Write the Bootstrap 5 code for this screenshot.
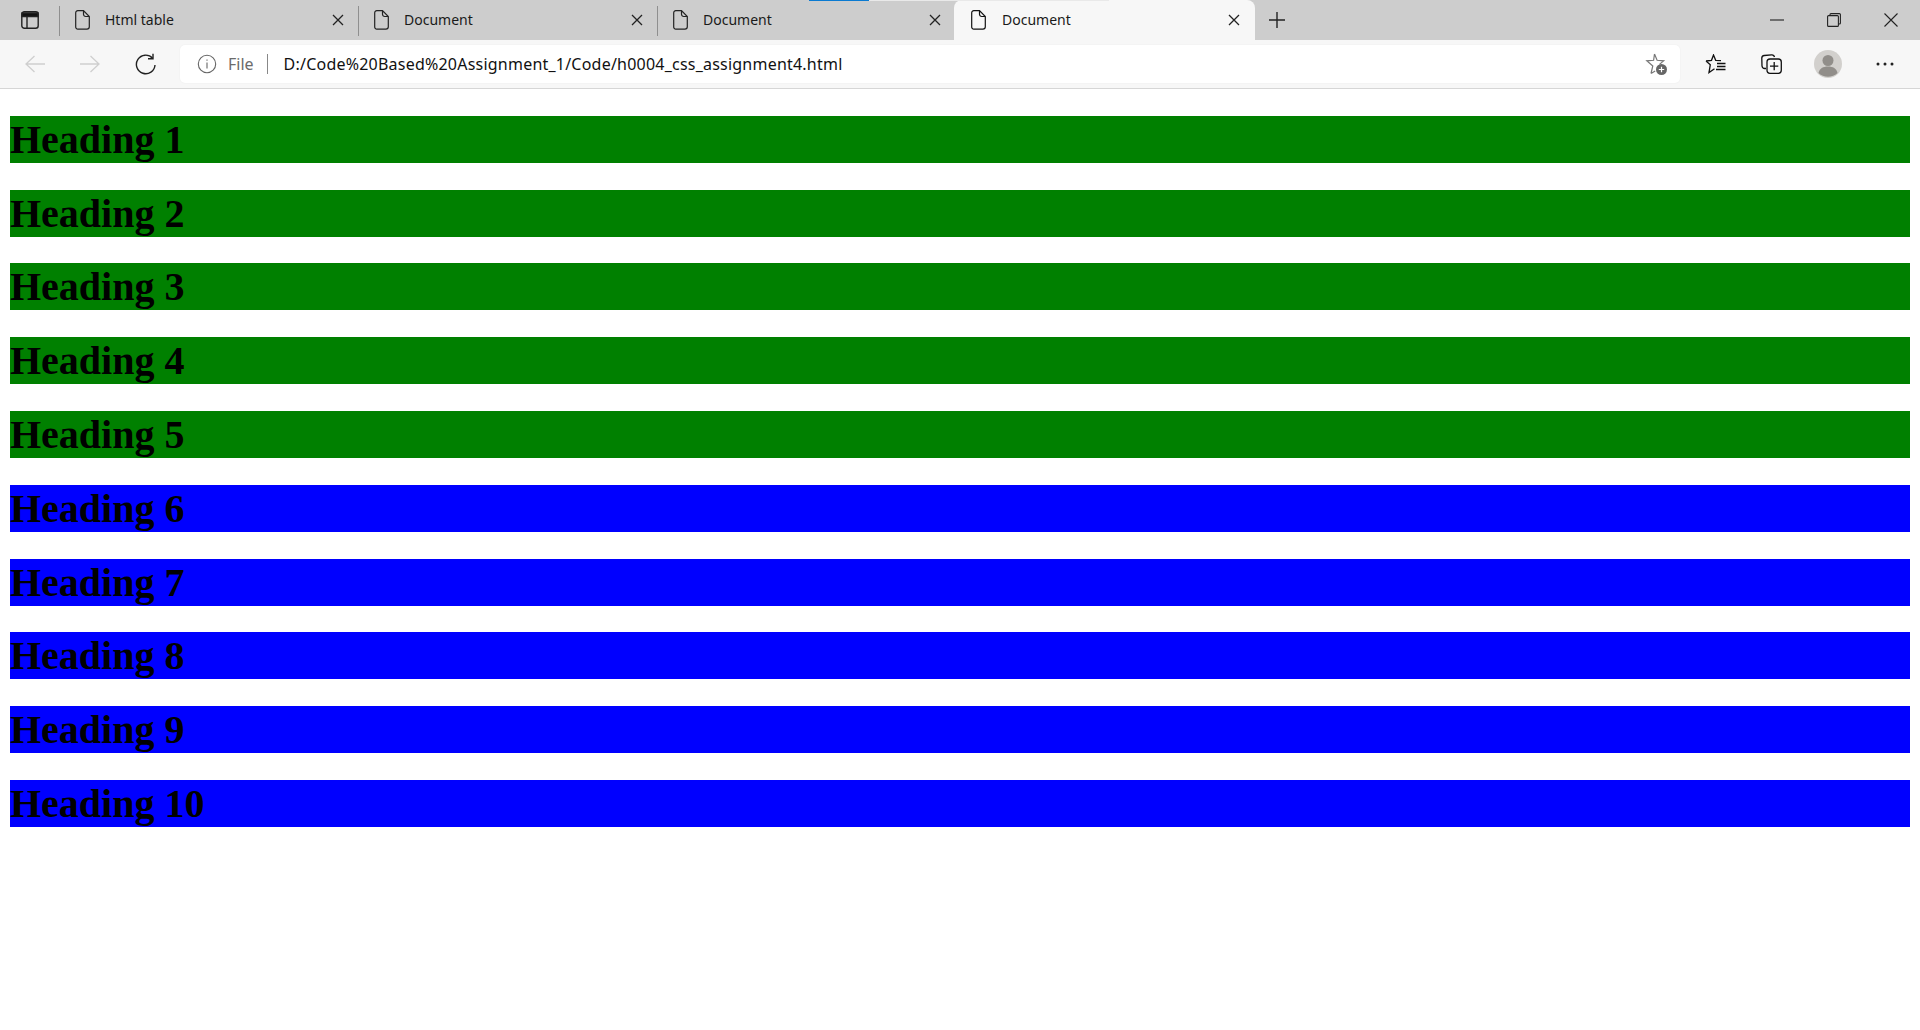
<!DOCTYPE html>
<html lang="en">
<head>
<meta charset="utf-8">
<title>Document</title>
<link href="https://cdn.jsdelivr.net/npm/bootstrap@5.3.0/dist/css/bootstrap.min.css" rel="stylesheet">
<style>
html,body{height:1030px;overflow:hidden;background:#fff}
.chrome-ui{font-family:"Noto Sans","Open Sans",sans-serif;color:#1a1a1a;position:relative}
.tabstrip{height:40px;background:#cdcdcd}
.strip-lead{width:59px;padding-left:21px;flex:none}
.strip-sep{width:1px;height:30px;background:#8f8f8f;align-self:center;flex:none;margin-top:1px}
.tabitem{width:298px;height:40px;flex:none;font-size:14px;line-height:40px;padding-left:15px}
.tabitem .tab-title{margin-left:15px;flex:1}
.tabitem .tab-x{margin-right:14px}
.tabitem-active{width:301px;background:#f7f7f7;border-radius:8px 8px 0 0;padding-left:17px}
.tabitem-active .tab-title{margin-left:16px}
.tabitem-active .tab-x{margin-right:15px}
.tabitem-last{width:296px}
.tabitem-last .tab-x{margin-right:13px}
.plus-btn{margin-left:13px;flex:none}
.win-btns{margin-left:auto;margin-right:1px}
.win-btn{width:57px;display:flex;justify-content:center}
.progress-a{position:absolute;top:0;left:809px;width:60px;height:1px;background:#0a7ad1}
.progress-b{position:absolute;top:0;left:869px;width:240px;height:1px;background:#e9e9e9}
.toolbar{height:49px;background:#f7f7f7;border-bottom:1px solid #d6d6d6;padding-top:5px}
.nav-icons{width:180px;padding-left:25px;height:38px;flex:none}
.nav-slot{width:55px;flex:none}
.addr{width:1500px;flex:none;height:38px;background:#fff;border-radius:5px;font-size:16px;line-height:38px;box-shadow:0 0 2px rgba(0,0,0,.06);padding-left:17px;padding-right:12px}
.addr-file{color:#6b6b6b;margin-left:11px}
.addr-sep{width:1px;height:20px;background:#888;margin:0 16px 0 13px}
.addr-url{color:#111;letter-spacing:.22px}
.tool-right{height:38px;padding-left:7px;flex:none}
.tool-slot{width:56px;display:flex;justify-content:center}
.tool-slot-avatar{margin-left:1px}
.tool-slot-end{margin-left:1px}
.page-wrap{padding:26.8px 10px 0}
h1.bar-head{font-family:"Liberation Serif","Times New Roman",serif;font-weight:700;font-size:40px;line-height:47px;height:47px;margin:0 0 26.8px;color:#000}
.bar-green{background:#008000}
.bar-blue{background:#0000ff}
</style>
</head>
<body>
<div class="chrome-ui">
  <div class="tabstrip d-flex align-items-center">
    <div class="strip-lead d-flex align-items-center">
      <svg width="18" height="18" viewBox="0 0 18 18" fill="none" stroke="#222" stroke-width="1.4"><rect x=".8" y=".8" width="16.4" height="16.4" rx="2.5"/><path d="M1 2h16v3.500H1z" fill="#111"/><path d="M6 5v12"/></svg>
    </div>
    <div class="strip-sep"></div>
    <div class="tabitem d-flex align-items-center">
      <svg width="15" height="20" viewBox="0 0 15 20" fill="none" stroke="#222" stroke-width="1.2"><path d="M2.8.7h5.7l5.8 5.8v10.3a2.400 2.400 0 0 1-2.400 2.400H2.800a2.200 2.200 0 0 1-2.100-2.400V3a2.200 2.200 0 0 1 2.100-2.300zM8.500.7v3.600a2.200 2.200 0 0 0 2.200 2.200h3.600"/></svg>
      <span class="tab-title">Html table</span>
      <svg class="tab-x" width="12" height="12" viewBox="0 0 12 12" stroke="#222" stroke-width="1.3"><path d="M1 1l10 10M11 1L1 11"/></svg>
    </div>
    <div class="strip-sep"></div>
    <div class="tabitem d-flex align-items-center">
      <svg width="15" height="20" viewBox="0 0 15 20" fill="none" stroke="#222" stroke-width="1.2"><path d="M2.8.7h5.7l5.8 5.8v10.3a2.400 2.400 0 0 1-2.400 2.400H2.800a2.200 2.200 0 0 1-2.100-2.400V3a2.200 2.200 0 0 1 2.100-2.300zM8.500.7v3.600a2.200 2.200 0 0 0 2.200 2.200h3.600"/></svg>
      <span class="tab-title">Document</span>
      <svg class="tab-x" width="12" height="12" viewBox="0 0 12 12" stroke="#222" stroke-width="1.3"><path d="M1 1l10 10M11 1L1 11"/></svg>
    </div>
    <div class="strip-sep"></div>
    <div class="tabitem tabitem-last d-flex align-items-center">
      <svg width="15" height="20" viewBox="0 0 15 20" fill="none" stroke="#222" stroke-width="1.2"><path d="M2.8.7h5.7l5.8 5.8v10.3a2.400 2.400 0 0 1-2.400 2.400H2.800a2.200 2.200 0 0 1-2.100-2.400V3a2.200 2.200 0 0 1 2.100-2.300zM8.500.7v3.600a2.200 2.200 0 0 0 2.200 2.200h3.600"/></svg>
      <span class="tab-title">Document</span>
      <svg class="tab-x" width="12" height="12" viewBox="0 0 12 12" stroke="#222" stroke-width="1.3"><path d="M1 1l10 10M11 1L1 11"/></svg>
    </div>
    <div class="tabitem tabitem-active d-flex align-items-center">
      <svg width="15" height="20" viewBox="0 0 15 20" fill="none" stroke="#111" stroke-width="1.2"><path d="M2.8.7h5.7l5.8 5.8v10.3a2.400 2.400 0 0 1-2.400 2.400H2.800a2.200 2.200 0 0 1-2.100-2.400V3a2.200 2.200 0 0 1 2.100-2.300zM8.500.7v3.600a2.200 2.200 0 0 0 2.200 2.200h3.600"/></svg>
      <span class="tab-title">Document</span>
      <svg class="tab-x" width="12" height="12" viewBox="0 0 12 12" stroke="#222" stroke-width="1.3"><path d="M1 1l10 10M11 1L1 11"/></svg>
    </div>
    <svg class="plus-btn" width="18" height="18" viewBox="0 0 18 18" stroke="#222" stroke-width="1.4"><path d="M9 1v16M1 9h16"/></svg>
    <div class="win-btns d-flex align-items-center">
      <div class="win-btn"><svg width="14" height="14" viewBox="0 0 14 14" stroke="#222" stroke-width="1.1"><path d="M0 7h14"/></svg></div>
      <div class="win-btn"><svg width="14" height="14" viewBox="0 0 14 14" fill="none" stroke="#222" stroke-width="1.1"><rect x=".6" y="2.6" width="10.8" height="10.8" rx="1"/><path d="M3 2.500V1.600a1 1 0 0 1 1-1h8.400a1 1 0 0 1 1 1V10a1 1 0 0 1-1 1h-1"/></svg></div>
      <div class="win-btn"><svg width="14" height="14" viewBox="0 0 14 14" stroke="#222" stroke-width="1.1"><path d="M.5.5l13 13M13.500.5l-13 13"/></svg></div>
    </div>
  </div>
  <div class="progress-a"></div>
  <div class="progress-b"></div>
  <div class="toolbar d-flex">
    <div class="nav-icons d-flex align-items-center">
      <div class="nav-slot"><svg class="d-block" width="20" height="18" viewBox="0 0 20 18" fill="none" stroke="#cfcfcf" stroke-width="1.3"><path d="M20 9H1M9.500 1L1 9l8.500 8"/></svg></div>
      <div class="nav-slot"><svg class="d-block" width="20" height="18" viewBox="0 0 20 18" fill="none" stroke="#cfcfcf" stroke-width="1.3"><path d="M0 9h19M10.500 1L19 9l-8.500 8"/></svg></div>
      <div class="nav-slot"><svg class="d-block" width="21" height="22" viewBox="0 0 21 22" fill="none" stroke="#222" stroke-width="1.4"><path d="M17.600 5.200A9.300 9.300 0 1 0 20 12"/><path d="M18 .8v5h-5"/></svg></div>
    </div>
    <div class="addr d-flex align-items-center">
      <svg width="20" height="20" viewBox="0 0 20 20" fill="none" stroke="#666" stroke-width="1.1"><circle cx="10" cy="10" r="8.700"/><path d="M10 8.500v6M10 5.400v1.400"/></svg>
      <span class="addr-file">File</span>
      <span class="addr-sep"></span>
      <span class="addr-url flex-grow-1">D:/Code%20Based%20Assignment_1/Code/h0004_css_assignment4.html</span>
      <svg width="24" height="24" viewBox="0 0 24 24" fill="none" stroke="#777" stroke-width="1.200"><path d="M10.500 2l2.600 6.300 6.600.5-4.200 3.600M7 21.500l1.800-7.500-6-5.200 6.800-.5L10.500 2M7 21.500l4.200-2.500"/><circle cx="17.500" cy="17.500" r="5.500" fill="#666" stroke="none"/><path d="M17.500 14.800v5.400M14.800 17.500h5.400" stroke="#fff"/></svg>
    </div>
    <div class="tool-right d-flex align-items-center">
      <div class="tool-slot"><svg width="21" height="20" viewBox="0 0 21 20" fill="none" stroke="#111" stroke-width="1.3"><path d="M1 7l5.500-.7L8.500 1l2.200 5.300 5.300.4M1 7l4.300 3.700L4 18.500l5.500-3.800M12 9.500h8.500M12 12.500h8.500M11 15.500h9.500"/></svg></div>
      <div class="tool-slot"><svg width="21" height="20" viewBox="0 0 21 20" fill="none" stroke="#111" stroke-width="1.3"><path d="M5 14.500H3.800a2.800 2.800 0 0 1-2.800-2.500L.8 4.500A2.800 2.800 0 0 1 3.300 1.500L10.500.8a2.800 2.800 0 0 1 3 2.200"/><rect x="6" y="5" width="14.300" height="14.300" rx="3"/><path d="M13.200 8v8.300M9 12.200h8.300"/></svg></div>
      <div class="tool-slot tool-slot-avatar"><svg width="28" height="28" viewBox="0 0 28 28"><circle cx="14" cy="14" r="14" fill="#d2d0cd"/><circle cx="14" cy="10.500" r="5.500" fill="#918e8a"/><path d="M4.500 23c1-4.500 4.500-6.500 9.500-6.500s8.500 2 9.500 6.500a14 14 0 0 1-19 0z" fill="#918e8a"/></svg></div>
      <div class="tool-slot tool-slot-end"><svg width="18" height="4" viewBox="0 0 18 4" fill="#222"><circle cx="2" cy="2" r="1.500"/><circle cx="9" cy="2" r="1.500"/><circle cx="16" cy="2" r="1.500"/></svg></div>
    </div>
  </div>
</div>
<main class="page-wrap">
  <h1 class="bar-head bar-green">Heading 1</h1>
  <h1 class="bar-head bar-green">Heading 2</h1>
  <h1 class="bar-head bar-green">Heading 3</h1>
  <h1 class="bar-head bar-green">Heading 4</h1>
  <h1 class="bar-head bar-green">Heading 5</h1>
  <h1 class="bar-head bar-blue">Heading 6</h1>
  <h1 class="bar-head bar-blue">Heading 7</h1>
  <h1 class="bar-head bar-blue">Heading 8</h1>
  <h1 class="bar-head bar-blue">Heading 9</h1>
  <h1 class="bar-head bar-blue">Heading 10</h1>
</main>
<script src="https://cdn.jsdelivr.net/npm/bootstrap@5.3.0/dist/js/bootstrap.bundle.min.js"></script>
</body>
</html>
